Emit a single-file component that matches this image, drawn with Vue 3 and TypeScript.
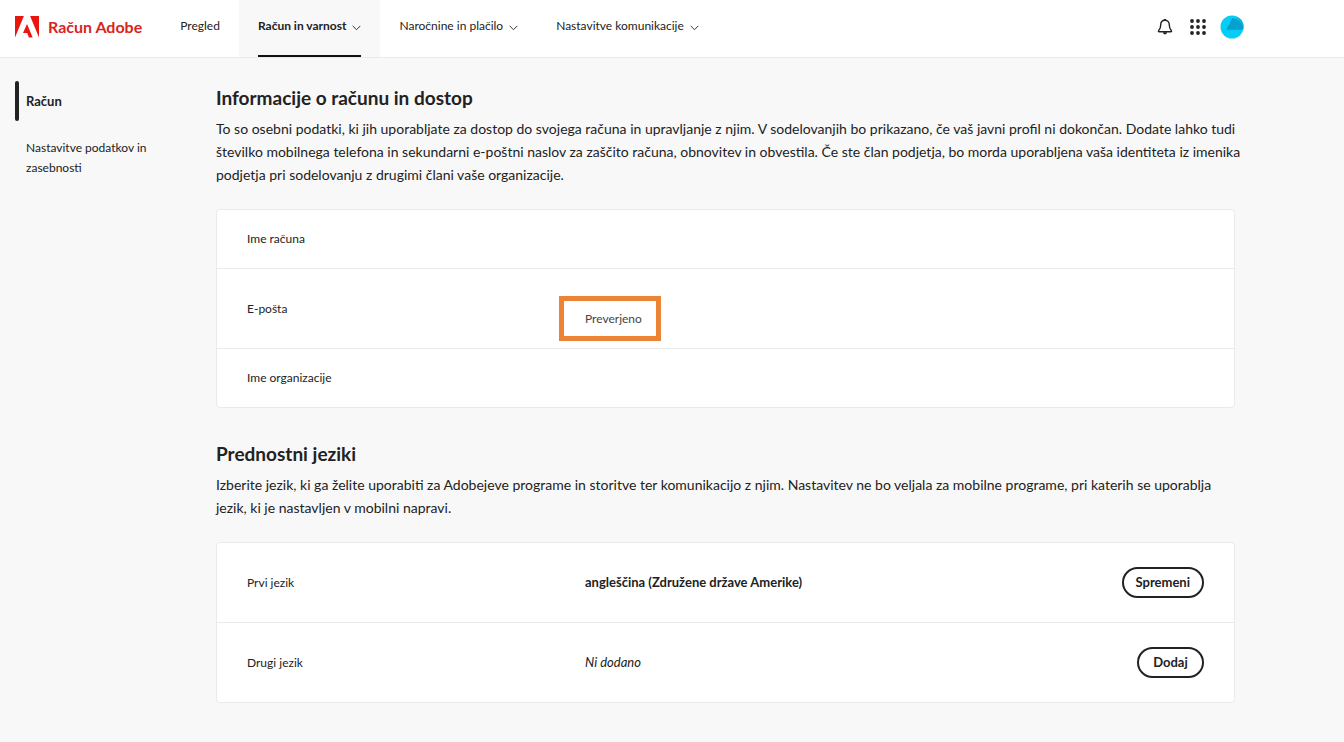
<script setup lang="ts">
interface NavItem {
  label: string
  menu: boolean
  active?: boolean
}

const navItems: NavItem[] = [
  { label: 'Pregled', menu: false },
  { label: 'Račun in varnost', menu: true, active: true },
  { label: 'Naročnine in plačilo', menu: true },
  { label: 'Nastavitve komunikacije', menu: true },
]

const dots: number[] = [2, 8, 14]
</script>

<template>
  <div class="page">
    <header class="topbar">
      <a class="brand" href="#">
        <svg class="logo" viewBox="0 0 24 22" aria-hidden="true">
          <path d="M0 0h8.9L0 21.4zM15.1 0H24v21.4zM12 7.9l5.7 13.5h-3.8l-1.7-4.3H8z" />
        </svg>
        <span>Račun Adobe</span>
      </a>
      <nav class="nav" aria-label="Glavni meni">
        <template v-for="item in navItems" :key="item.label">
          <button v-if="item.menu" type="button" class="nav-item" :class="{ active: item.active }">
            <span class="nav-label">
              {{ item.label }}
              <svg class="chevron" viewBox="0 0 9 6" aria-hidden="true"><path d="M.7.9 4.5 4.7 8.3.9" /></svg>
            </span>
          </button>
          <a v-else href="#" class="nav-item"><span class="nav-label">{{ item.label }}</span></a>
        </template>
      </nav>
      <div class="tools">
        <button type="button" class="icon-button" aria-label="Obvestila">
          <svg width="22" height="18" viewBox="0 0 16 18" aria-hidden="true">
            <path class="line" d="M8 2.2C5.1 2.2 3.7 4.3 3.7 7c0 3-.6 4.1-2 5.6-.5.6-.3 1.2.5 1.2h11.6c.8 0 1-.6.5-1.2-1.4-1.5-2-2.6-2-5.6 0-2.7-1.4-4.8-4.3-4.8z" />
            <path d="M6.9.9h2.2v1.5H6.9zM5.9 14.3h4.2a2.1 2.1 0 0 1-4.2 0z" />
          </svg>
        </button>
        <button type="button" class="icon-button" aria-label="Aplikacije">
          <svg width="16" height="16" viewBox="0 0 16 16" aria-hidden="true">
            <template v-for="y in dots" :key="y">
              <circle v-for="x in dots" :key="x" :cx="x" :cy="y" r="1.9" />
            </template>
          </svg>
        </button>
        <button type="button" class="icon-button" aria-label="Profil">
          <svg width="24" height="24" viewBox="0 0 24 24" aria-hidden="true">
            <circle cx="12" cy="12" r="11.5" fill="#05cdf6" />
            <path d="M12.3 3.2 6.3 14.8l16.9-.2A11.5 11.5 0 0 0 18.5 2.4z" fill="#0abbe6" />
            <path d="M12.3 3.2 6.3 14.8l16.9-.2A11.5 11.5 0 0 0 18.5 5.2z" fill="#079fce" />
          </svg>
        </button>
      </div>
    </header>

    <div class="layout">
      <aside class="sidebar">
        <a href="#" class="side-link current" aria-current="page">Račun</a>
        <a href="#" class="side-link">Nastavitve podatkov in zasebnosti</a>
      </aside>

      <main class="content">
        <section>
          <h2>Informacije o računu in dostop</h2>
          <p class="intro">
            To so osebni podatki, ki jih uporabljate za dostop do svojega računa in upravljanje z njim. V sodelovanjih bo prikazano, če vaš javni profil ni dokončan. Dodate lahko tudi<br>
            številko mobilnega telefona in sekundarni e-poštni naslov za zaščito računa, obnovitev in obvestila. Če ste član podjetja, bo morda uporabljena vaša identiteta iz imenika<br>
            podjetja pri sodelovanju z drugimi člani vaše organizacije.
          </p>
          <dl class="card">
            <div class="row">
              <dt>Ime računa</dt>
              <dd></dd>
            </div>
            <div class="row tall">
              <dt>E-pošta</dt>
              <dd class="status"><span class="highlight">Preverjeno</span></dd>
            </div>
            <div class="row">
              <dt>Ime organizacije</dt>
              <dd></dd>
            </div>
          </dl>
        </section>

        <section>
          <h2>Prednostni jeziki</h2>
          <p class="intro">
            Izberite jezik, ki ga želite uporabiti za Adobejeve programe in storitve ter komunikacijo z njim. Nastavitev ne bo veljala za mobilne programe, pri katerih se uporablja<br>
            jezik, ki je nastavljen v mobilni napravi.
          </p>
          <dl class="card">
            <div class="row tall">
              <dt>Prvi jezik</dt>
              <dd><strong>angleščina (Združene države Amerike)</strong></dd>
              <dd><button type="button" class="pill">Spremeni</button></dd>
            </div>
            <div class="row tall">
              <dt>Drugi jezik</dt>
              <dd><em>Ni dodano</em></dd>
              <dd><button type="button" class="pill">Dodaj</button></dd>
            </div>
          </dl>
        </section>
      </main>
    </div>
  </div>
</template>

<style>
body {
  margin: 0;
  background: #f8f8f8;
}
</style>

<style scoped>
.page {
  min-height: 100vh;
  background: #f8f8f8;
  color: #222;
  font-family: Lato, "Liberation Sans", sans-serif;
  font-size: 12px;
  line-height: 20px;
}
button {
  font: inherit;
  color: inherit;
  cursor: pointer;
}
a {
  color: inherit;
  text-decoration: none;
}
strong,
em {
  font-size: 13px;
}
.topbar {
  display: flex;
  height: 57px;
  background: #fff;
  border-bottom: 1px solid #eaeaea;
  padding: 0 100px 0 15px;
}
.brand {
  display: flex;
  align-items: center;
  gap: 9px;
  height: 54px;
  color: #d7261e;
  font-size: 16px;
  font-weight: 700;
}
.logo {
  width: 24px;
  height: 22px;
  fill: #e8160c;
}
.nav {
  display: flex;
  margin-left: 19px;
}
.nav-item {
  display: flex;
  border: 0;
  padding: 0 19px;
  background: none;
}
.nav-item.active {
  background: #f8f8f8;
  font-weight: 700;
}
.nav-label {
  box-sizing: border-box;
  display: flex;
  align-items: center;
  gap: 6px;
  height: 57px;
  padding-bottom: 3px;
  border-bottom: 2px solid transparent;
}
.active .nav-label {
  border-color: #111;
}
.chevron {
  width: 9px;
  height: 6px;
  margin-top: 3px;
  fill: none;
  stroke: #333;
}
.tools {
  display: flex;
  align-items: center;
  gap: 14px;
  height: 54px;
  margin-left: auto;
}
.icon-button {
  display: flex;
  border: 0;
  padding: 0;
  background: none;
  fill: #222;
}
.line {
  fill: none;
  stroke: #222;
  stroke-width: 1.4;
}
.layout {
  display: grid;
  grid-template-columns: 201px 1fr;
  padding: 23px 109px 40px 15px;
}
.sidebar {
  display: flex;
  flex-direction: column;
  gap: 7px;
}
.side-link {
  width: 130px;
  padding: 10px 0 10px 11px;
}
.side-link.current {
  position: relative;
  font-size: 13px;
  font-weight: 700;
}
.side-link.current::before {
  content: "";
  position: absolute;
  inset: 0 auto 0 0;
  width: 4px;
  border-radius: 2px;
  background: #222;
}
.content {
  padding-top: 3px;
}
h2 {
  margin: 0;
  font-size: 19px;
  line-height: 28px;
  font-weight: 700;
}
.intro {
  margin: 5px -16px 23px 0;
  font-size: 14px;
  line-height: 23px;
}
.card {
  margin: 0 0 32px;
  background: #fff;
  border: 1px solid #eaeaea;
  border-radius: 4px;
}
.row {
  display: grid;
  grid-template-columns: 338px 1fr auto;
  align-items: center;
  min-height: 58px;
  padding: 0 30px;
}
.row.tall {
  min-height: 79px;
}
.row + .row {
  border-top: 1px solid #eaeaea;
}
dd {
  margin: 0;
}
.status {
  padding-top: 20px;
  color: #444;
}
.highlight {
  position: relative;
}
.highlight::before {
  content: "";
  position: absolute;
  inset: -15px -19px -15px -26px;
  border: 5px solid #ec8436;
}
.pill {
  display: block;
  min-width: 67px;
  border: 2px solid #222;
  border-radius: 16px;
  padding: 3px 12px 4px;
  background: #fff;
  font-size: 13px;
  font-weight: 700;
}
</style>
